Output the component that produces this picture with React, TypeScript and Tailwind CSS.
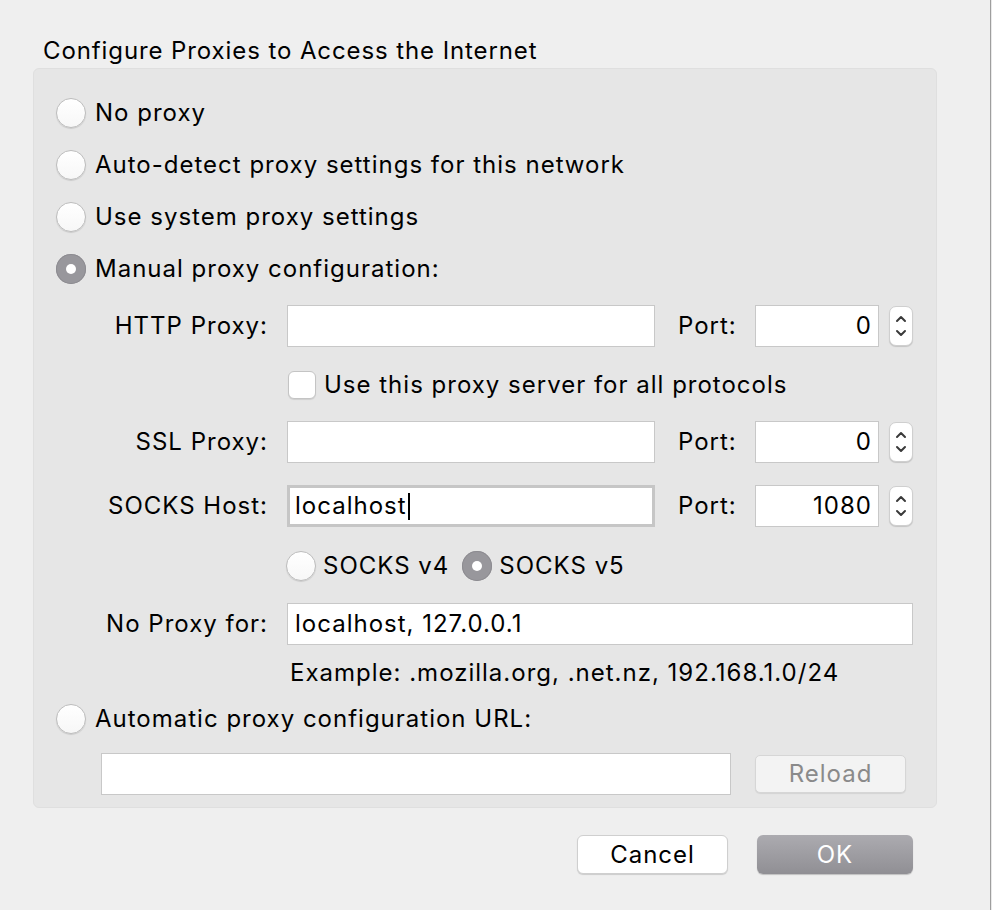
import React from "react";

const FONT = { fontFamily: 'Inter, "Liberation Sans", Arial, sans-serif' };

function Radio({ checked = false }: { checked?: boolean }) {
  if (checked) {
    return (
      <span className="flex h-[30px] w-[30px] shrink-0 items-center justify-center rounded-full bg-[#98979c] shadow-[inset_0_0_0_1px_#8d8c91]">
        <span className="h-[10px] w-[10px] rounded-full bg-white" />
      </span>
    );
  }
  return (
    <span className="h-[30px] w-[30px] shrink-0 rounded-full border border-[#bdbdbd] bg-gradient-to-b from-white to-[#f7f7f7] shadow-[0_1px_1px_rgba(0,0,0,0.12)]" />
  );
}

function RadioRow({ label, checked }: { label: string; checked?: boolean }) {
  return (
    <div className="flex h-[52px] items-center pl-[22px]">
      <Radio checked={checked} />
      <span className="ml-[9px] text-[24px] text-black">{label}</span>
    </div>
  );
}

function Spinner() {
  return (
    <div className="ml-[10px] flex h-[40px] w-[24px] flex-col items-center justify-center gap-[6px] rounded-[7px] border border-[#cfcfcf] bg-white shadow-[0_1px_1px_rgba(0,0,0,0.15)]">
      <svg width="12" height="8" viewBox="0 0 12 8" fill="none">
        <path d="M2 6 L6 2 L10 6" stroke="#3a3a3a" strokeWidth="2" strokeLinecap="round" strokeLinejoin="round" />
      </svg>
      <svg width="12" height="8" viewBox="0 0 12 8" fill="none">
        <path d="M2 2 L6 6 L10 2" stroke="#3a3a3a" strokeWidth="2" strokeLinecap="round" strokeLinejoin="round" />
      </svg>
    </div>
  );
}

function Field({ value = "", focused = false, width, caret = false, right = false }: { value?: string; focused?: boolean; width: string; caret?: boolean; right?: boolean }) {
  return (
    <div
      className={`flex h-[42px] items-center bg-white text-[24px] text-black ${width} ${
        focused ? "border-[3px] border-[#c6c6c6] pl-[5px]" : "border border-[#c8c8c8] pl-[7px]"
      } ${right ? "justify-end pr-[6px]" : ""}`}
    >
      <span>{value}</span>
      {caret && <span className="ml-[1px] h-[27px] w-[2px] bg-black" />}
    </div>
  );
}

function ProxyRow({ label, value, port, focused, caret, mt }: { label: string; value?: string; port: string; focused?: boolean; caret?: boolean; mt: string }) {
  return (
    <div className={`flex items-center ${mt}`}>
      <span className="w-[234px] text-right text-[24px] text-black">{label}</span>
      <div className="ml-[19px]">
        <Field value={value} focused={focused} caret={caret} width="w-[368px]" />
      </div>
      <span className="ml-[23px] w-[58px] text-[24px] text-black">Port:</span>
      <div className="ml-[19px]">
        <Field value={port} width="w-[124px]" right />
      </div>
      <Spinner />
    </div>
  );
}

export default function App() {
  return (
    <div className="flex h-[910px] w-[992px] bg-[#efefef] tracking-[1px]" style={FONT}>
      <div className="flex w-[990px] flex-col">
        <div className="ml-[43px] mt-[37px] h-[31px] text-[24px] leading-[28px] tracking-[0.9px] text-black">
          Configure Proxies to Access the Internet
        </div>

        <div className="ml-[33px] flex h-[740px] w-[904px] flex-col rounded-[6px] border border-[#dfdfdf] bg-[#e6e6e6]">
          <div className="mt-[18px]">
            <RadioRow label="No proxy" />
            <RadioRow label="Auto-detect proxy settings for this network" />
            <RadioRow label="Use system proxy settings" />
            <RadioRow label="Manual proxy configuration:" checked />
          </div>

          <ProxyRow label="HTTP Proxy:" port="0" mt="mt-[10px]" />

          <div className="ml-[254px] mt-[24px] flex h-[28px] items-center">
            <span className="h-[28px] w-[28px] rounded-[6px] border border-[#c4c4c4] bg-white shadow-[0_1px_1px_rgba(0,0,0,0.1)]" />
            <span className="ml-[8px] text-[24px] text-black">Use this proxy server for all protocols</span>
          </div>

          <ProxyRow label="SSL Proxy:" port="0" mt="mt-[22px]" />
          <ProxyRow label="SOCKS Host:" value="localhost" port="1080" focused caret mt="mt-[22px]" />

          <div className="ml-[252px] mt-[24px] flex h-[30px] items-center">
            <Radio />
            <span className="ml-[7px] text-[24px] text-black">SOCKS v4</span>
            <span className="ml-[13px]">
              <Radio checked />
            </span>
            <span className="ml-[7px] text-[24px] text-black">SOCKS v5</span>
          </div>

          <div className="mt-[22px] flex items-center">
            <span className="w-[234px] text-right text-[24px] text-black">No Proxy for:</span>
            <div className="ml-[19px]">
              <Field value="localhost, 127.0.0.1" width="w-[626px]" />
            </div>
          </div>

          <div className="ml-[256px] mt-[14px] h-[28px] text-[24px] leading-[28px] text-black">
            Example: .mozilla.org, .net.nz, 192.168.1.0/24
          </div>

          <div className="mt-[17px] flex h-[30px] items-center pl-[22px]">
            <Radio />
            <span className="ml-[9px] text-[24px] text-black">Automatic proxy configuration URL:</span>
          </div>

          <div className="ml-[67px] mt-[19px] flex items-center">
            <Field width="w-[630px]" />
            <button className="ml-[24px] h-[38px] w-[151px] rounded-[5px] border border-[#d6d6d6] bg-[#f3f3f3] text-[24px] tracking-[1px] text-[#8a8a8a] shadow-[0_1px_1px_rgba(0,0,0,0.08)]">
              Reload
            </button>
          </div>
        </div>

        <div className="mt-[27px] flex justify-end pr-[77px]">
          <button className="h-[39px] w-[151px] rounded-[6px] border border-[#cfcfcf] bg-white text-[24px] tracking-[1px] text-black shadow-[0_1px_1px_rgba(0,0,0,0.15)]">
            Cancel
          </button>
          <button className="ml-[29px] h-[39px] w-[156px] rounded-[6px] bg-gradient-to-b from-[#acabb0] to-[#908f94] text-[24px] tracking-[1px] text-white shadow-[0_1px_1px_rgba(0,0,0,0.2)]">
            OK
          </button>
        </div>
      </div>
      <div className="w-[1px] bg-[#9e9e9e]" />
      <div className="w-[1px] bg-[#e9e9e9]" />
    </div>
  );
}
